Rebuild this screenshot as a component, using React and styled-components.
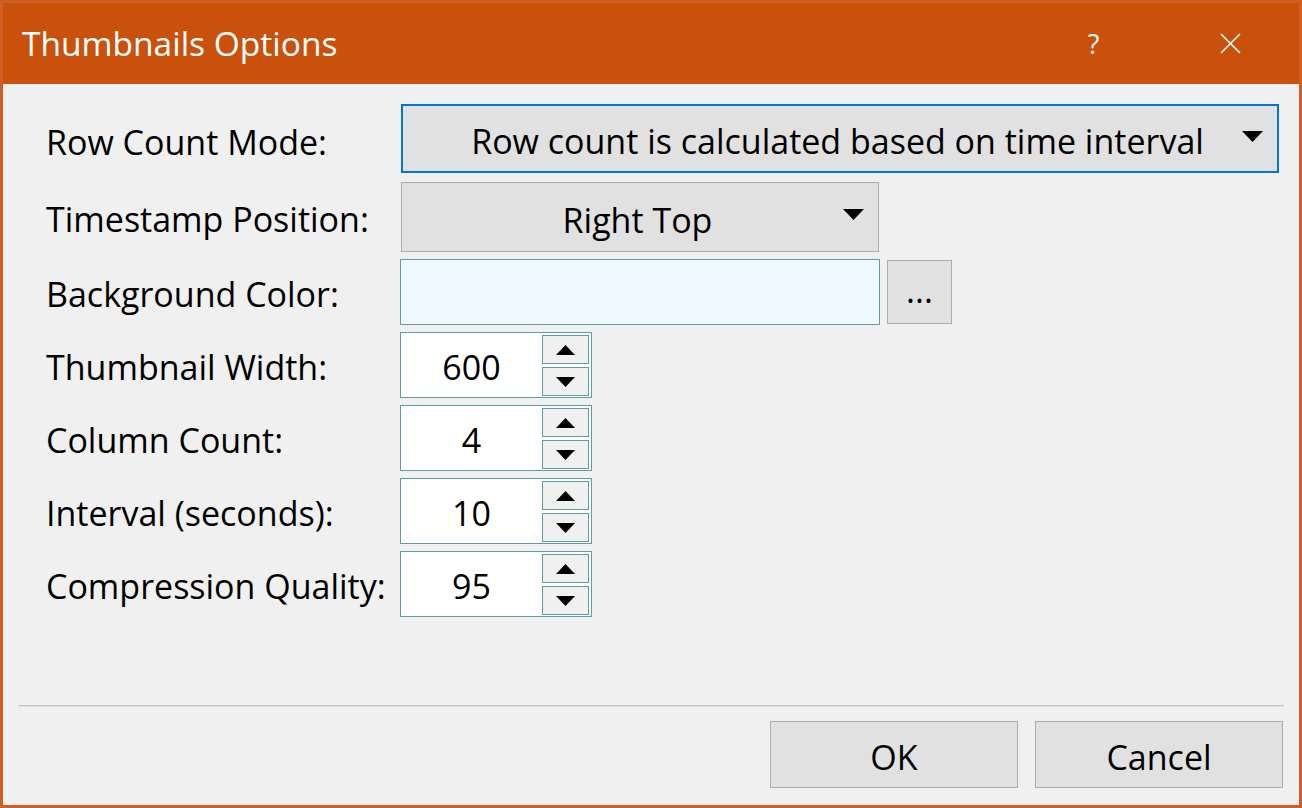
import React from "react";
import styled, { createGlobalStyle } from "styled-components";

const GlobalStyle = createGlobalStyle`
  html, body { margin: 0; padding: 0; }
  body { font-family: "Open Sans", "Noto Sans", sans-serif; background: #f0f0f0; }
  * { box-sizing: border-box; }
`;

const Window = styled.div`
  width: 1302px;
  height: 808px;
  border: 3px solid #cf5f27;
  display: flex;
  flex-direction: column;
  background: #f0f0f0;
  overflow: hidden;
`;

const TitleBar = styled.div`
  height: 81px;
  flex: none;
  background: #c9510c;
  display: flex;
  align-items: center;
  color: #ffffff;
`;

const Title = styled.div`
  flex: 1;
  padding-left: 19px;
  font-size: 33.5px;
  line-height: 1;
`;

const CaptionButton = styled.div`
  width: 137px;
  height: 100%;
  display: flex;
  align-items: center;
  justify-content: center;
  font-size: 27px;
  color: #ffffff;
`;

const Body = styled.div`
  flex: 1;
  display: flex;
  flex-direction: column;
  padding: 20px 0 17px 0;
`;

const Form = styled.div`
  display: grid;
  grid-template-columns: 354px auto;
  row-gap: 7px;
  padding-left: 43px;
  align-items: center;
  justify-items: start;
`;

const Label = styled.div`
  font-size: 34px;
  color: #000;
  line-height: 1;
  padding-top: 4px;
  white-space: nowrap;
`;

const Combo = styled.div`
  width: ${(p) => p.$w}px;
  height: ${(p) => p.$h}px;
  margin-left: 1px;
  margin-bottom: ${(p) => p.$mb || 0}px;
  background: #e1e1e1;
  border: ${(p) => (p.$focused ? "2px solid #0078d7" : "1px solid #adadad")};
  display: grid;
  grid-template-columns: 45px 1fr 50px;
  align-items: center;
  font-size: 34px;
  color: #000;
`;

const ComboText = styled.div`
  grid-column: 2;
  text-align: center;
  white-space: nowrap;
  line-height: 1;
  padding-top: 5px;
`;

const ComboArrow = styled.div`
  grid-column: 3;
  display: flex;
  justify-content: center;
  padding-bottom: 5px;
`;

const ColorRow = styled.div`
  display: flex;
  align-items: center;
  gap: 7px;
`;

const ColorBox = styled.div`
  width: 480px;
  height: 66px;
  background: #f0f8ff;
  border: 1px solid #5f9ea0;
`;

const SmallButton = styled.div`
  width: 65px;
  height: 64px;
  background: #e1e1e1;
  border: 1px solid #adadad;
  display: flex;
  align-items: center;
  justify-content: center;
  font-size: 34px;
  line-height: 1;
  padding-bottom: 4px;
  color: #000;
`;

const Spinner = styled.div`
  width: 192px;
  height: 66px;
  background: #ffffff;
  border: 1px solid #5f9ea0;
  display: grid;
  grid-template-columns: 1fr 47px;
  padding: 2px 2px 1px 0;
`;

const SpinValue = styled.div`
  display: flex;
  align-items: center;
  justify-content: center;
  font-size: 34px;
  line-height: 1;
  color: #000;
  padding-top: 3px;
`;

const SpinButtons = styled.div`
  display: flex;
  flex-direction: column;
  gap: 3px;
`;

const SpinButton = styled.div`
  height: 29px;
  background: #f0f0f0;
  border: 1px solid #5f9ea0;
  display: flex;
  align-items: center;
  justify-content: center;
`;

const Spacer = styled.div`
  flex: 1;
`;

const Separator = styled.div`
  margin: 0 15px;
  height: 2px;
  border-top: 1px solid #c2c2c2;
  border-bottom: 1px solid #e2e2e2;
`;

const ButtonRow = styled.div`
  margin-top: 14px;
  display: flex;
  justify-content: flex-end;
  gap: 17px;
  padding-right: 16px;
`;

const DialogButton = styled.div`
  width: 248px;
  height: 67px;
  background: #e1e1e1;
  border: 1px solid #adadad;
  display: flex;
  align-items: center;
  justify-content: center;
  font-size: 34px;
  line-height: 1;
  color: #000;
  padding-top: 4px;
`;

const DownArrow = ({ w = 21, h = 11 }) => (
  <svg width={w} height={h} viewBox={`0 0 ${w} ${h}`}>
    <polygon points={`0,0 ${w},0 ${w / 2},${h}`} fill="#000" />
  </svg>
);

const UpArrow = ({ w = 19, h = 10 }) => (
  <svg width={w} height={h} viewBox={`0 0 ${w} ${h}`}>
    <polygon points={`0,${h} ${w},${h} ${w / 2},0`} fill="#000" />
  </svg>
);

const CloseIcon = () => (
  <svg width="21" height="21" viewBox="0 0 21 21">
    <path d="M1 1 L20 20 M20 1 L1 20" stroke="#fff" strokeWidth="1.6" fill="none" />
  </svg>
);

const NumberSpinner = ({ value }) => (
  <Spinner>
    <SpinValue>{value}</SpinValue>
    <SpinButtons>
      <SpinButton>
        <UpArrow />
      </SpinButton>
      <SpinButton>
        <DownArrow w={19} h={10} />
      </SpinButton>
    </SpinButtons>
  </Spinner>
);

const spinners = [
  { label: "Thumbnail Width:", value: "600" },
  { label: "Column Count:", value: "4" },
  { label: "Interval (seconds):", value: "10" },
  { label: "Compression Quality:", value: "95" },
];

export default function App() {
  return (
    <>
      <GlobalStyle />
      <Window>
        <TitleBar>
          <Title>Thumbnails Options</Title>
          <CaptionButton>?</CaptionButton>
          <CaptionButton>
            <CloseIcon />
          </CaptionButton>
        </TitleBar>
        <Body>
          <Form>
            <Label>Row Count Mode:</Label>
            <Combo $w={878} $h={69} $mb={2} $focused>
              <ComboText>Row count is calculated based on time interval</ComboText>
              <ComboArrow>
                <DownArrow />
              </ComboArrow>
            </Combo>

            <Label>Timestamp Position:</Label>
            <Combo $w={478} $h={70}>
              <ComboText>Right Top</ComboText>
              <ComboArrow>
                <DownArrow />
              </ComboArrow>
            </Combo>

            <Label>Background Color:</Label>
            <ColorRow>
              <ColorBox />
              <SmallButton>...</SmallButton>
            </ColorRow>

            {spinners.map((s) => (
              <React.Fragment key={s.label}>
                <Label>{s.label}</Label>
                <NumberSpinner value={s.value} />
              </React.Fragment>
            ))}
          </Form>
          <Spacer />
          <Separator />
          <ButtonRow>
            <DialogButton>OK</DialogButton>
            <DialogButton>Cancel</DialogButton>
          </ButtonRow>
        </Body>
      </Window>
    </>
  );
}
